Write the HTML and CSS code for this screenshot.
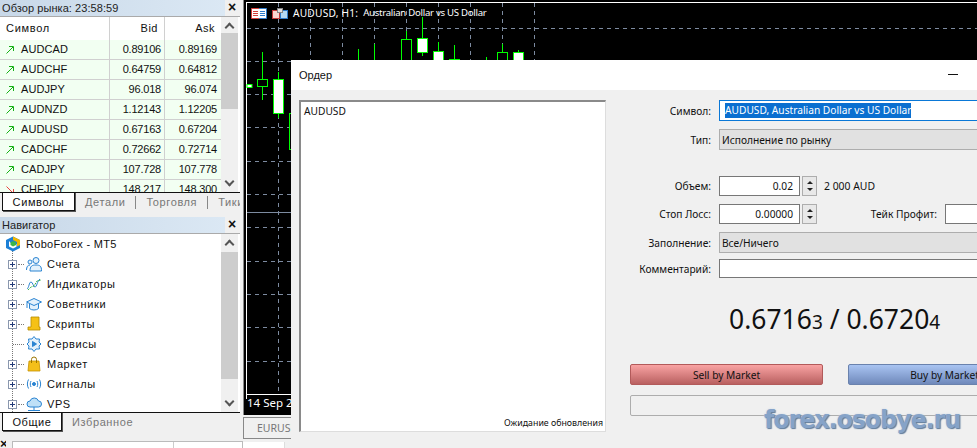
FILE: index.html
```html
<!DOCTYPE html>
<html lang="ru">
<head>
<meta charset="utf-8">
<title>Ордер</title>
<link rel="stylesheet" href="styles.css">
</head>
<body>
<div class="app">
  <aside class="side">
    <section class="panel market">
      <header class="phead"><span>Обзор рынка: 23:58:59</span><b class="x">×</b></header>
      <div class="pbody">
        <div class="tablewrap">
          <div class="row th"><span class="c1">Символ</span><span class="c2">Bid</span><span class="c3">Ask</span></div>
          <div class="row"><span class="c1"><svg class="arr" viewBox="0 0 8 8"><path d="M.5 7.500 7 1M3 .5h4.500V5" /></svg>AUDCAD</span><span class="c2">0.89106</span><span class="c3">0.89169</span></div>
          <div class="row"><span class="c1"><svg class="arr" viewBox="0 0 8 8"><path d="M.5 7.500 7 1M3 .5h4.500V5" /></svg>AUDCHF</span><span class="c2">0.64759</span><span class="c3">0.64812</span></div>
          <div class="row"><span class="c1"><svg class="arr" viewBox="0 0 8 8"><path d="M.5 7.500 7 1M3 .5h4.500V5" /></svg>AUDJPY</span><span class="c2">96.018</span><span class="c3">96.074</span></div>
          <div class="row"><span class="c1"><svg class="arr" viewBox="0 0 8 8"><path d="M.5 7.500 7 1M3 .5h4.500V5" /></svg>AUDNZD</span><span class="c2">1.12143</span><span class="c3">1.12205</span></div>
          <div class="row"><span class="c1"><svg class="arr" viewBox="0 0 8 8"><path d="M.5 7.500 7 1M3 .5h4.500V5" /></svg>AUDUSD</span><span class="c2">0.67163</span><span class="c3">0.67204</span></div>
          <div class="row"><span class="c1"><svg class="arr" viewBox="0 0 8 8"><path d="M.5 7.500 7 1M3 .5h4.500V5" /></svg>CADCHF</span><span class="c2">0.72662</span><span class="c3">0.72714</span></div>
          <div class="row"><span class="c1"><svg class="arr" viewBox="0 0 8 8"><path d="M.5 7.500 7 1M3 .5h4.500V5" /></svg>CADJPY</span><span class="c2">107.728</span><span class="c3">107.778</span></div>
          <div class="row"><span class="c1"><svg class="arr down" viewBox="0 0 8 8"><path d="M.5.5 7 7M3 7.500h4.500V3" /></svg>CHFJPY</span><span class="c2">148.217</span><span class="c3">148.300</span></div>
        </div>
        <div class="sbar mk"><i class="up"></i><i class="thumb"></i><i class="dn"></i></div>
      </div>
      <nav class="tabs"><span class="tab on">Символы</span><span class="tab">Детали</span><u></u><span class="tab">Торговля</span><u></u><span class="tab">Тики</span></nav>
    </section>
    <section class="panel nav">
      <header class="phead"><span>Навигатор</span><b class="x">×</b></header>
      <div class="pbody">
        <div class="tree">
          <div class="node root">
            <svg class="ic" viewBox="0 0 16 16"><path d="M8 .5 15 4v8l-7 3.500L1 12V4Z" fill="#1c7fd6"/><path d="M4 5v5.500l4 2 3.500-1.800V8L8 9.500Z" fill="#fff"/><path d="M8 .5 15 4v5l-3 1.500V6L8 4Z" fill="#f2b600"/><path d="M5.500 6.500 8 5l3 1.500V9L8 10.500 5.500 9Z" fill="#3bb54a"/></svg><span class="rname">RoboForex - MT5</span>
          </div>
          <div class="node"><i class="plus"></i><svg class="ic" viewBox="0 0 16 16" fill="#e4f1fb" stroke="#2a84d2"><circle cx="4" cy="6" r="2"/><path d="M.5 14c0-3 1-5 3.500-5"/><circle cx="10" cy="4.500" r="3"/><path d="M4 15c0-5 2-6 6-6s5.500 1 5.500 6z"/></svg>Счета</div>
          <div class="node"><i class="plus"></i><svg class="ic" viewBox="0 0 16 16" fill="none"><path d="M1 13c2-1 2-7 4-7s2 5 4 5 2-6 5-8" stroke="#2a84d2"/><path d="M2 14l3-3 3-1 3-5 4-1" stroke="#3bb54a" stroke-dasharray="2 1"/></svg>Индикаторы</div>
          <div class="node"><i class="plus"></i><svg class="ic" viewBox="0 0 16 16" fill="#e4f1fb" stroke="#2a84d2"><path d="M3.500 8v4.500c2 2 7 2 9 0V8"/><path d="M.5 6 8 2.500 15.500 6 8 9.500Z"/><path d="M1 7v5"/></svg>Советники</div>
          <div class="node"><i class="plus"></i><svg class="ic" viewBox="0 0 16 16"><path d="M5 1h8v10h1v3H2v-3h3Z" fill="#f5c116" stroke="#b58a00" stroke-width=".8"/></svg>Скрипты</div>
          <div class="node noplus"><svg class="ic" viewBox="0 0 16 16" fill="#e4f1fb" stroke="#2a84d2"><path d="M8 .5l2 2.500h3.500l-.5 3L15 8l-2 2 .5 3H10l-2 2.500L6 13H2.500l.5-3L1 8l2-2-.5-3H6Z"/><path d="M6.500 5.500 10.500 8l-4 2.500Z" fill="#2a84d2"/></svg>Сервисы</div>
          <div class="node"><i class="plus"></i><svg class="ic" viewBox="0 0 16 16"><path d="M3 5h10l1 10H2Z" fill="#f4bf1a" stroke="#c69200" stroke-width=".8"/><path d="M5.500 7V3.500a2.500 2.500 0 0 1 5 0V7" fill="none" stroke="#9a7400"/></svg>Маркет</div>
          <div class="node"><i class="plus"></i><svg class="ic" viewBox="0 0 16 16" fill="none" stroke="#2a84d2"><circle cx="8" cy="8" r="1.500" fill="#2a84d2"/><path d="M5 5c-1 2-1 4 0 6M11 5c1 2 1 4 0 6M2.500 3.500c-1.500 3-1.500 6 0 9M13.500 3.500c1.500 3 1.500 6 0 9"/></svg>Сигналы</div>
          <div class="node"><i class="plus"></i><svg class="ic" viewBox="0 0 16 16"><path d="M4 11a3 3 0 0 1 0-6 4.500 4.500 0 0 1 8.500 0A3 3 0 0 1 12.500 11Z" fill="#bfe0f7" stroke="#2a84d2"/><path d="M8 11v3M2 14.500h12" stroke="#2a84d2"/></svg>VPS</div>
        </div>
        <div class="sbar nv"><i class="up"></i><i class="thumb"></i><i class="dn"></i></div>
      </div>
      <nav class="tabs"><span class="tab on">Общие</span><span class="tab">Избранное</span></nav>
    </section>
    <div class="foot"><b class="x">×</b><span class="footbox"></span></div>
  </aside>
  <main class="work">
    <div class="chart">
      <svg class="plot" viewBox="244 0 733 415" width="733" height="415">
        <g stroke="#7d8ba0" stroke-dasharray="4 4" fill="none">
          <path d="M247 28.500H977M247 61.500H977M247 94.500H977M247 127.500H977M247 161.500H977M247 194.500H977M247 227.500H977M247 261.500H977M247 294.500H977M247 327.500H977M247 361.500H977"/>
          <path d="M278.500 3V394M310.500 3V394M342.500 3V394M374.500 3V394M406.500 3V394M438.500 3V394M470.500 3V394M502.500 3V394M534.500 3V394"/>
        </g>
        <path d="M247 212.500H977" stroke="#7d8ba0"/>
        <path d="M246.500 2V399M246 2.500H977M246 394.500H977" stroke="#fff" fill="none"/>
        <g stroke="#00ff00" fill="none">
          <rect x="247" y="84.500" width="5" height="3" fill="#fff"/>
          <path d="M262.500 52V100"/>
          <rect x="257.500" y="79.500" width="10" height="7" fill="#000"/>
          <path d="M278.500 72V118"/>
          <rect x="273.500" y="79.500" width="10" height="34" fill="#fff"/>
          <rect x="289.500" y="113.500" width="10" height="36" fill="#000"/>
          <path d="M358.500 49V60M374.500 44V60M406.500 31V39M422.500 17V38M422.500 53V56M438.500 42V51M454.500 45V59M486.500 57V60M502.500 44V52M518.500 50V52"/>
          <rect x="401.500" y="39.500" width="10" height="21" fill="#000"/>
          <rect x="417.500" y="38.500" width="10" height="14" fill="#fff"/>
          <rect x="433.500" y="51.500" width="10" height="9" fill="#fff"/>
          <rect x="449.500" y="59.500" width="10" height="2" fill="#000"/>
          <rect x="497.500" y="52.500" width="10" height="8" fill="#000"/>
          <rect x="513.500" y="52.500" width="10" height="8" fill="#fff"/>
        </g>
      </svg>
      <div class="ctitle">
        <svg class="cic" viewBox="0 0 16 11"><rect x=".5" y=".5" width="15" height="10" fill="#fff"/><path d="M.5.5H8M.5 10.500H8M.5.5v10" stroke="#d5403a" fill="none"/><path d="M8 .5h7.500v10H8" stroke="#2f7bc8" fill="none"/><path d="M2 3h5v1H2zM2 5h5v1H2zM2 7h5v1H2z" fill="#d5403a"/><path d="M9 3h5v1H9zM9 5h5v1H9zM9 7h5v1H9z" fill="#2f7bc8"/></svg>
        <svg class="cic" viewBox="0 0 16 11"><rect x=".5" y="2.500" width="7" height="8" fill="#fbd5d0" stroke="#c53a3a"/><rect x="8.500" y="2.500" width="7" height="8" fill="#b5d9f2" stroke="#2f7bc8"/><rect x="5.500" y=".5" width="5" height="4" fill="#e4e4e4" stroke="#888"/></svg>
        <span class="cname">AUDUSD, H1:</span><span class="cdesc">Australian Dollar vs US Dollar</span>
      </div>
      <div class="cdate">14 Sep 2021</div>
    </div>
    <div class="ctabs"><span class="ctab">EURUSD,H1</span></div>
    <div class="cfoot"></div>
  </main>
</div>
<div class="dialog">
  <header class="dtitle"><span>Ордер</span><i class="mini"></i></header>
  <div class="dbody">
    <div class="list">
      <div class="ltop">AUDUSD</div>
      <div class="lbot">Ожидание обновления</div>
    </div>
    <form class="form">
      <div class="fr h21"><label>Символ:</label><div class="box sym"><mark>AUDUSD, Australian Dollar vs US Dollar</mark></div></div>
      <div class="fr h21 g8"><label>Тип:</label><div class="box sel">Исполнение по рынку</div></div>
      <div class="fr h20 g26"><label>Объем:</label><div class="box num">0.02</div><div class="spin"><i class="su"></i><i class="sd"></i></div><span class="hint">2 000 AUD</span></div>
      <div class="fr h20 g8"><label>Стоп Лосс:</label><div class="box num">0.00000</div><div class="spin"><i class="su"></i><i class="sd"></i></div><label class="lab2">Тейк Профит:</label><div class="box tp"></div></div>
      <div class="fr h21 g8"><label>Заполнение:</label><div class="box sel">Все/Ничего</div></div>
      <div class="fr h19 g6"><label>Комментарий:</label><div class="box cmt"></div></div>
      <div class="price">0.6716<small>3</small> / 0.6720<small>4</small></div>
      <div class="btns"><button type="button" class="btn sell">Sell by Market</button><button type="button" class="btn buy">Buy by Market</button></div>
      <div class="status"></div>
    </form>
  </div>
  <div class="wm">forex.osobye.ru</div>
</div>
</body>
</html>
```
FILE: styles.css
```css
* { box-sizing: border-box; }
html, body { margin: 0; height: 100%; }
body { width: 977px; height: 448px; overflow: hidden; position: relative; background: #f0f0f0; font: 10.2px/16px "Noto Sans", "Liberation Sans", sans-serif; color: #111; }
.app { display: flex; height: 448px; }
.side { width: 243px; flex: none; display: flex; flex-direction: column; background: #f0f0f0; font: 11px/16px "Liberation Sans", sans-serif; letter-spacing: .6px; }
.panel { display: flex; flex-direction: column; width: 240px; }
.market { height: 212px; }
.nav { height: 215px; margin-top: 5px; }
.phead { height: 16px; flex: none; display: flex; justify-content: space-between; align-items: center; padding-left: 2px; background: linear-gradient(90deg, #c8d8e8, #dbe8f4); border-right: 15px solid #f0f0f0; position: relative; color: #222; letter-spacing: .07px; }
.x { position: absolute; right: -13px; top: 0; width: 12px; text-align: center; font-size: 14px; color: #111; line-height: 15px; letter-spacing: 0; }
.pbody { flex: 1; min-height: 0; display: flex; background: #fff; border-top: 1px solid #aaa; overflow: hidden; }
.tablewrap { width: 221px; flex: none; overflow: hidden; }
.row { display: flex; height: 20px; background: #f2fff2; border-bottom: 1px solid #d0d0d0; align-items: center; line-height: 19px; letter-spacing: .1px; }
.row.th { height: 23px; background: #fff; border-bottom: 0; }
.row span { height: 100%; display: flex; align-items: center; }
.c1 { width: 110px; padding-left: 6px; border-right: 1px solid #d0d0d0; }
.th .c1 { letter-spacing: .7px; }
.c2 { width: 55px; justify-content: flex-end; padding-right: 3px; border-right: 1px solid #d0d0d0; letter-spacing: -.2px; }
.c3 { width: 56px; justify-content: flex-end; padding-right: 4px; letter-spacing: -.2px; }
.th .c2, .th .c3 { padding-right: 6px; letter-spacing: .5px; }
.arr { width: 8px; height: 8px; margin-right: 7px; fill: none; stroke: #14b014; flex: none; }
.arr.down { stroke: #e84040; }
.sbar { width: 17px; flex: none; background: #f0f0f0; display: flex; flex-direction: column; position: relative; }
.sbar i { display: block; flex: none; }
.sbar .up, .sbar .dn { height: 17px; position: relative; }
.sbar .up::after, .sbar .dn::after { content: ""; position: absolute; left: 5px; width: 5px; height: 5px; border: solid #555; border-width: 2px 0 0 2px; transform: rotate(45deg); top: 7px; }
.sbar .dn::after { transform: rotate(225deg); top: 3px; }
.sbar .thumb { background: #cdcdcd; }
.mk .up { height: 16px; }
.mk .thumb { height: 76px; }
.mk .dn { margin-top: auto; }
.nv .up { height: 18px; }
.nv .thumb { height: 127px; }
.nv .dn { margin-top: auto; }
.tabs { height: 20px; flex: none; display: flex; align-items: center; background: #f0f0f0; border-top: 1px solid #111; color: #777; overflow: hidden; position: relative; padding-bottom: 1px; }
.tab { flex: none; padding: 0 10px; white-space: nowrap; height: 100%; display: flex; align-items: center; }
.tab.on { margin-left: 2px; background: #fff; color: #111; border: 1px solid #111; border-top: 1px solid #fff; width: 73px; justify-content: center; padding: 0; box-shadow: 1px 1px 0 #555; height: 19px; align-self: flex-start; margin-top: -1px; }
.tabs u { width: 1px; height: 13px; background: #888; flex: none; }
.nav .tab.on { width: 60px; }
.foot { flex: 1; display: flex; align-items: flex-end; gap: 6px; }
.foot .x { position: static; font-size: 13px; line-height: 8px; width: 6px; overflow: hidden; }
.footbox { width: 231px; height: 7px; background: #fff; border: 1px solid #bbb; border-bottom: 0; position: relative; }
.footbox::after { content: ""; position: absolute; left: 160px; top: 0; bottom: 0; border-left: 1px solid #ccc; }
.tree { width: 221px; flex: none; overflow: hidden; background: #fff; position: relative; }
.tree::before { content: ""; position: absolute; left: 12px; top: 16px; bottom: 0; border-left: 1px dotted #777; }
.node { height: 20px; display: flex; align-items: center; padding-left: 8px; position: relative; }
.node.root { padding-left: 5px; gap: 5px; }
.rname { letter-spacing: .3px; }
.root .ic { margin: 0; }
.plus { width: 9px; height: 9px; flex: none; border: 1px solid #8a97ae; background: #fff; position: relative; margin-right: 9px; z-index: 1; }
.plus::before { content: ""; position: absolute; left: 1px; right: 1px; top: 3px; height: 1px; background: #223a78; }
.plus::after { content: ""; position: absolute; top: 1px; bottom: 1px; left: 3px; width: 1px; background: #223a78; }
.node:not(.root)::after { content: ""; position: absolute; left: 18px; top: 10px; width: 6px; border-top: 1px dotted #777; }
.noplus { padding-left: 26px; }
.noplus::after { left: 13px !important; width: 11px !important; }
.ic { width: 16px; height: 16px; margin-right: 5px; flex: none; }
.work { flex: 1; display: flex; flex-direction: column; min-width: 0; }
.chart { height: 415px; flex: none; background: #000; position: relative; overflow: hidden; border-left: 1px solid #888; }
.plot { display: block; }
.ctitle { position: absolute; left: 7px; top: 5px; display: flex; align-items: center; gap: 5px; color: #fff; font-size: 10.2px; line-height: 16px; white-space: nowrap; }
.cic { width: 16px; height: 11px; flex: none; }
.cname { letter-spacing: .2px; }
.cdesc { font-size: 9.6px; letter-spacing: -.27px; }
.cdate { position: absolute; left: 3px; top: 396px; color: #fff; font-size: 11.5px; line-height: 14px; white-space: nowrap; }
.ctabs { height: 22px; flex: none; margin-top: 2px; border-bottom: 1px solid #888; }
.ctab { display: block; width: 60px; height: 21px; border: 1px solid #888; border-bottom: 0; background: #f0f0f0; color: #777; padding: 2px 13px; font-size: 10.5px; white-space: nowrap; overflow: hidden; }
.cfoot { width: 42px; flex: 1; margin-top: 3px; background: #fff; border-right: 1px solid #ddd; }
.dialog { position: absolute; left: 291px; top: 60px; width: 686px; height: 388px; background: #f0f0f0; overflow: hidden; }
.dtitle { height: 30px; background: #fff; display: flex; align-items: center; padding-left: 8px; font: 11px/16px "Liberation Sans", sans-serif; position: relative; }
.mini { position: absolute; left: 657px; top: 14px; width: 10px; height: 1px; background: #111; }
.dbody { display: flex; padding: 10px 0 0 8px; }
.list { width: 307px; height: 332px; flex: none; background: #fff; border: solid; border-width: 2px 1px 1px 2px; border-color: #8a8a8a #ddd #ddd #8a8a8a; display: flex; flex-direction: column; justify-content: space-between; padding: 1px 2px 0 3px; }
.lbot { text-align: right; font-size: 8.8px; }
.form { width: 500px; flex: none; padding-left: 24px; }
.fr { display: flex; align-items: center; }
.h21 { height: 21px; }
.h20 { height: 20px; }
.h19 { height: 19px; }
.g8 { margin-top: 8px; }
.g6 { margin-top: 6px; }
.g26 { margin-top: 26px; }
.fr label { width: 81px; flex: none; text-align: right; white-space: nowrap; }
.fr .lab2 { width: 120px; }
.box { height: 100%; margin-left: 8px; background: #fff; border: 1px solid #777; display: flex; align-items: center; white-space: nowrap; }
.sym { width: 400px; border-color: #0a78d7; padding-left: 5px; }
.sym mark { background: #0a6fd0; color: #fff; line-height: 15px; }
.sel { width: 400px; background: #e1e1e1; border-color: #adadad; padding-left: 2px; }
.num { width: 81px; justify-content: flex-end; padding-right: 6px; }
.spin { width: 15px; height: 20px; margin-left: 2px; border: 1px solid #adadad; background: #e8e8e8; flex: none; display: flex; flex-direction: column; justify-content: space-around; align-items: center; padding: 2px 0; }
.su, .sd { width: 0; height: 0; border: 3px solid transparent; display: block; }
.su { border-bottom-color: #222; border-top: 0; }
.sd { border-top-color: #222; border-bottom: 0; }
.hint { margin-left: 7px; font-size: 10.4px; }
.lab2 + .box { margin-left: 8px; }
.tp { width: 80px; }
.cmt { width: 400px; }
.price { margin-top: 26px; margin-left: 99px; height: 60px; font-size: 26.5px; line-height: 30px; white-space: nowrap; color: #111; }
.price small { font-size: 19px; }
.btns { display: flex; gap: 25px; }
.btn { height: 21px; width: 193px; flex: none; border: 1px solid; border-radius: 2px; font: 10.2px/16px "Noto Sans", "Liberation Sans", sans-serif; color: #111; padding: 0; }
.sell { background: linear-gradient(#f9a3a3, #b96060); border-color: #b25a5a; }
.buy { background: linear-gradient(#a9c4f2, #6f89bb); border-color: #6a82ad; }
.status { margin-top: 10px; width: 400px; height: 21px; border: 1px solid #adadad; border-radius: 2px; }
.wm { position: absolute; left: 473px; top: 344px; font: bold 24px/32px "DejaVu Sans", sans-serif; color: #86a3c8; text-shadow: 1px 1px 1px #5e7a9a, 0 0 2px #c8d6e6; white-space: nowrap; letter-spacing: -1.2px; }
```
